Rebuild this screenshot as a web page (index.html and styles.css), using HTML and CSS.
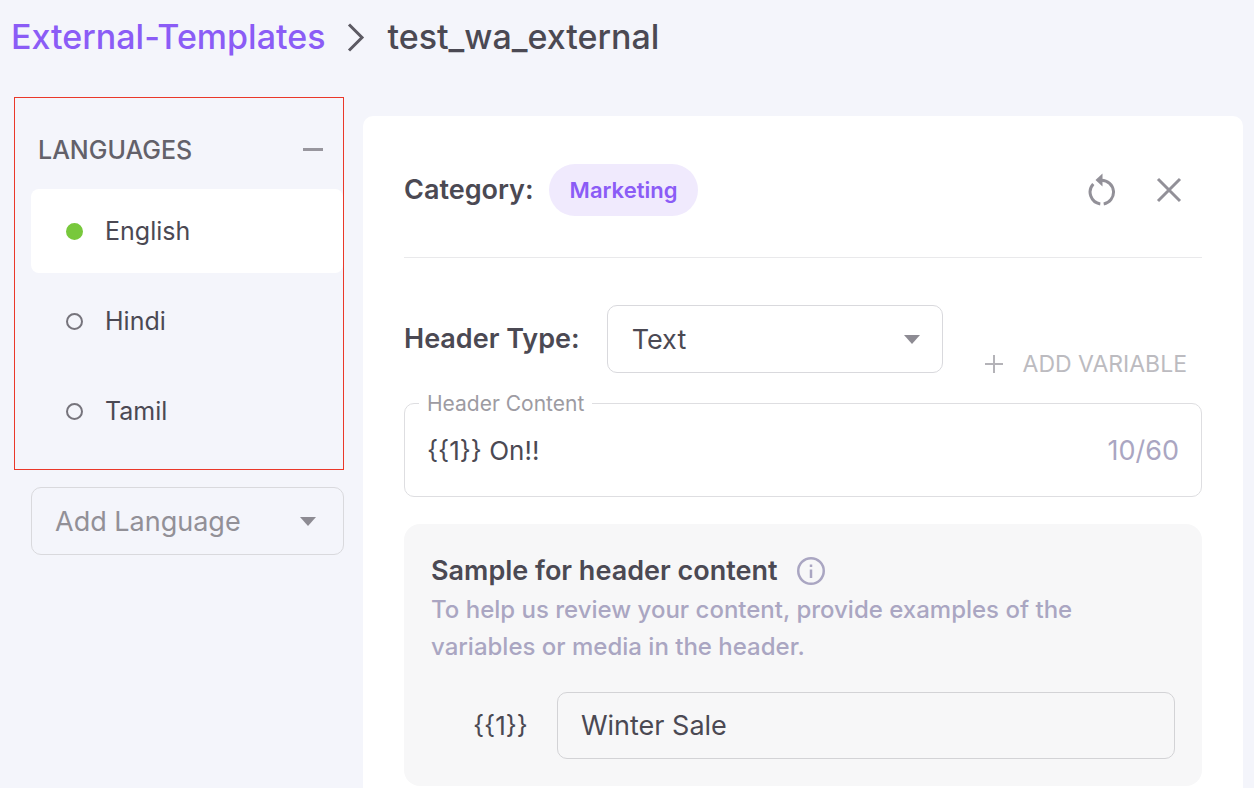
FILE: index.html
```html
<!DOCTYPE html>
<html lang="en">
<head>
<meta charset="utf-8">
<meta name="viewport" content="width=device-width, initial-scale=1">
<title>test_wa_external</title>
<link rel="stylesheet" href="styles.css">
</head>
<body>
<nav class="breadcrumb" aria-label="Breadcrumb">
  <a class="breadcrumb-link" href="#">External-Templates</a>
  <svg class="breadcrumb-chevron" width="18" height="30" viewBox="0 0 18 30" aria-hidden="true"><path d="M2 2.500 15 15.500 2 28.500"/></svg>
  <h1 class="breadcrumb-current">test_wa_external</h1>
</nav>
<div class="layout">
  <aside class="sidebar">
    <section class="languages">
      <div class="languages-head">
        <h2 class="languages-title">LANGUAGES</h2>
        <button class="icon-button" type="button" aria-label="Collapse languages">
          <svg width="20" height="20" viewBox="0 0 20 20" aria-hidden="true"><path class="dash" d="M0 9.500h20"/></svg>
        </button>
      </div>
      <div class="language-list">
        <button class="language is-active" type="button"><span class="dot"></span>English</button>
        <button class="language" type="button"><span class="dot"></span>Hindi</button>
        <button class="language" type="button"><span class="dot"></span>Tamil</button>
      </div>
    </section>
    <div class="select-wrap add-language">
      <select class="select select-muted" aria-label="Add Language"><option>Add Language</option></select>
      <svg class="caret" width="16" height="9" viewBox="0 0 16 9" aria-hidden="true"><path d="M0 0h16L8 9z"/></svg>
    </div>
  </aside>
  <main class="panel">
    <header class="panel-head">
      <h2 class="label">Category:</h2>
      <span class="chip">Marketing</span>
      <div class="panel-actions">
        <button class="icon-button" type="button" aria-label="Reset">
          <svg width="30" height="34" viewBox="0 0 30 34" aria-hidden="true">
            <path class="stroke" d="M13.300 31A12 12 0 0 1 6.300 11M16.700 31A12 12 0 0 0 14.500 7.200"/>
            <path class="fill" d="M15.500 .5v13L8.500 7z"/>
          </svg>
        </button>
        <button class="icon-button" type="button" aria-label="Close">
          <svg width="26" height="26" viewBox="0 0 26 26" aria-hidden="true"><path class="stroke" d="m2 2 22 22M24 2 2 24"/></svg>
        </button>
      </div>
    </header>
    <div class="type-row">
      <label class="label" for="header-type">Header Type:</label>
      <div class="select-wrap header-type">
        <select class="select" id="header-type"><option>Text</option></select>
        <svg class="caret" width="16" height="9" viewBox="0 0 16 9" aria-hidden="true"><path d="M0 0h16L8 9z"/></svg>
      </div>
      <button class="add-variable" type="button" disabled>
        <svg width="18" height="18" viewBox="0 0 18 18" aria-hidden="true"><path d="M9 0v18M0 9h18"/></svg>
        ADD VARIABLE
      </button>
    </div>
    <fieldset class="content-field">
      <legend class="content-legend"><label for="header-content">Header Content</label></legend>
      <div class="content-body">
        <input class="content-input" id="header-content" type="text" value="{{1}} On!!">
        <span class="counter">10/60</span>
      </div>
    </fieldset>
    <section class="sample">
      <div class="sample-head">
        <h3 class="label">Sample for header content</h3>
        <svg class="info" width="28" height="28" viewBox="0 0 28 28" aria-hidden="true">
          <circle cx="14" cy="14" r="12.750"/><path d="M14 12.500v8.500M14 7.500v2.500"/>
        </svg>
      </div>
      <p class="sample-text">To help us review your content, provide examples of the variables or media in the header.</p>
      <div class="sample-row">
        <label class="sample-label" for="sample-1">{{1}}</label>
        <input class="sample-input" id="sample-1" type="text" value="Winter Sale">
      </div>
    </section>
  </main>
</div>
</body>
</html>
```
FILE: styles.css
```css
* { box-sizing: border-box; }

body {
  display: flex;
  flex-direction: column;
  min-height: 100vh;
  margin: 0;
  background: #f4f5fb;
  color: #4b4953;
  font-family: Inter, "Liberation Sans", sans-serif;
  font-optical-sizing: none;
  font-size: 27px;
}

h1, h2, h3, p { margin: 0; }

button, input, select { font: inherit; color: inherit; }

button {
  padding: 0;
  border: 0;
  background: none;
}

.breadcrumb {
  display: flex;
  align-items: center;
  gap: 22px;
  padding: 13px 11px 36px;
  font-size: 34px;
  line-height: 48px;
}

.breadcrumb-link {
  color: #8b5cf6;
  font-weight: 500;
  text-decoration: none;
}

.breadcrumb-current {
  font-size: 34px;
  font-weight: 500;
}

.breadcrumb-chevron path {
  fill: none;
  stroke: #5c5a63;
  stroke-width: 3;
}

.layout {
  display: grid;
  flex: 1;
  grid-template-columns: 330px minmax(0, 1fr);
  gap: 19px;
  padding: 0 11px 0 14px;
}

.languages {
  padding: 24px 0 16px 16px;
  border: 1px solid #ea3829;
}

.languages-head {
  display: flex;
  align-items: center;
  justify-content: space-between;
  padding: 9px 20px 20px 7px;
}

.languages-title {
  color: #63616a;
  font-size: 25px;
  font-weight: 500;
  line-height: 38px;
}

.icon-button { display: flex; }

.icon-button svg { fill: none; }

.dash {
  stroke: #98969e;
  stroke-width: 3;
}

.language-list {
  display: grid;
  gap: 6px;
}

.language {
  display: flex;
  align-items: center;
  gap: 22px;
  height: 84px;
  padding-left: 35px;
  border-radius: 8px;
  font-size: 25px;
}

.is-active { background: #fff; }

.dot {
  width: 17px;
  height: 17px;
  border: 2px solid #76747c;
  border-radius: 50%;
}

.is-active .dot {
  border-color: #78c83c;
  background: #78c83c;
}

.select-wrap {
  display: grid;
  align-items: center;
}

.select-wrap > * { grid-area: 1 / 1; }

.select {
  width: 100%;
  height: 68px;
  padding: 0 24px;
  border: 1px solid #d9d9dd;
  border-radius: 10px;
  appearance: none;
  background: transparent;
}

.select-muted {
  padding: 0 23px;
  color: #929097;
}

.caret {
  justify-self: end;
  margin-right: 23px;
  fill: #8d8b93;
  pointer-events: none;
}

.add-language {
  margin: 17px 0 0 17px;
}

.add-language .caret { margin-right: 28px; }

.panel {
  margin-top: 19px;
  padding: 48px 41px 2px;
  border-radius: 10px 10px 0 0;
  background: #fff;
}

.label {
  font-size: 27px;
  font-weight: 600;
  line-height: 40px;
}

.panel-head {
  display: flex;
  align-items: center;
  gap: 15px;
  padding-bottom: 41px;
  border-bottom: 1px solid #e9e9eb;
}

.chip {
  padding: 0 21px;
  border-radius: 26px;
  background: #f0eafd;
  color: #8b5cf6;
  font-size: 22px;
  font-weight: 600;
  line-height: 52px;
}

.panel-actions {
  display: flex;
  align-items: center;
  gap: 39px;
  margin-left: auto;
  padding-right: 20px;
}

.stroke {
  stroke: #929098;
  stroke-width: 3;
}

.fill { fill: #929098; }

.type-row {
  display: flex;
  align-items: center;
  height: 76px;
  margin-top: 47px;
  padding-bottom: 8px;
}

.header-type {
  width: 336px;
  margin-left: 27px;
}

.add-variable {
  display: flex;
  align-items: center;
  align-self: flex-end;
  gap: 20px;
  margin-left: auto;
  margin-right: 15px;
  color: #bcbbc0;
  font-size: 23px;
  line-height: 18px;
}

.add-variable path {
  stroke: #b4b3b8;
  stroke-width: 2;
}

.content-field {
  min-width: 0;
  margin: 9px 0 0;
  padding: 0 22px 0 14px;
  border: 1px solid #dedee1;
  border-radius: 10px;
}

.content-legend {
  padding: 0 8px;
  color: #9d9ba2;
  font-size: 21px;
  line-height: 27px;
}

.content-body {
  display: flex;
  align-items: center;
  height: 79px;
  padding: 0 0 12px 8px;
}

.content-input {
  flex: 1;
  min-width: 0;
  padding: 0;
  border: 0;
  background: none;
  font-size: 26px;
}

.counter { color: #aaa6c2; }

.sample {
  margin-top: 27px;
  padding: 27px;
  border-radius: 16px;
  background: #f7f7f8;
}

.sample-head {
  display: flex;
  align-items: center;
  gap: 20px;
}

.info {
  fill: none;
  stroke: #aaa6c2;
  stroke-width: 2.500;
}

.sample-text {
  max-width: 680px;
  color: #aaa6c2;
  font-size: 24px;
  font-weight: 500;
  line-height: 37px;
}

.sample-row {
  display: flex;
  align-items: center;
  gap: 29px;
  margin-top: 27px;
  padding-left: 42px;
}

.sample-label { font-size: 26px; }

.sample-input {
  flex: 1;
  min-width: 0;
  height: 67px;
  padding: 0 23px;
  border: 1px solid #d3d3d6;
  border-radius: 10px;
  background: transparent;
}
```
